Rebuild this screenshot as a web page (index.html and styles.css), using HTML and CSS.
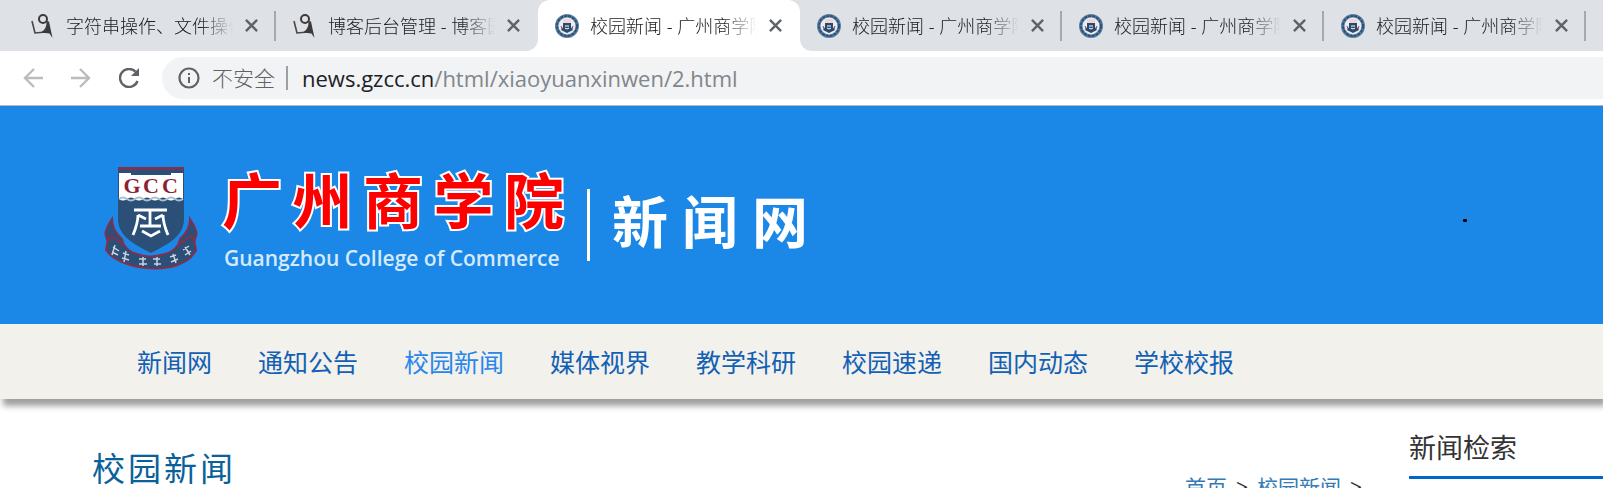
FILE: index.html
```html
<!DOCTYPE html>
<html lang="zh-CN">
<head>
<meta charset="utf-8">
<title>校园新闻 - 广州商学院</title>
<link rel="stylesheet" href="styles.css">
</head>
<body>
<svg class="sprite" aria-hidden="true">
<symbol id="icon-blog" viewBox="0 0 24 24">
<circle cx="12" cy="5" r="4" fill="none" stroke="#3c3a3a" stroke-width="2"/>
<path d="M1 7l3 12 11-1" fill="none" stroke="#4a4644" stroke-width="1.6"/>
<path d="M15.500 7L18 7.500 21.500 24 18.500 19.500 10 18.500Q16 15 15.500 7z" fill="#3c3a3a"/>
</symbol>
<symbol id="icon-school" viewBox="0 0 24 24">
<circle cx="12" cy="12" r="12" fill="#5c7fa3"/>
<circle cx="12" cy="12" r="10" fill="none" stroke="#2d5176" stroke-width="2" stroke-dasharray="3 1"/>
<circle cx="12" cy="12" r="8.500" fill="#e9edf2"/>
<path d="M8 9h8v4l2 3-6 3-6-3 2-3z" fill="#2c4a6c"/>
<path d="M8 5h8v4H8z" fill="#ecd6da"/>
<path d="M10 12h4M10 14l2 1 2-1" fill="none" stroke="#fff"/>
<path d="M6 12l1 3M18 12l-1 3" fill="none" stroke="#8a4a5c"/>
</symbol>
<symbol id="icon-close" viewBox="0 0 14 14">
<path d="M1 1l12 12M13 1L1 13" fill="none" stroke="#5f6368" stroke-width="2.6"/>
</symbol>
</svg>

<div class="tabs">
<div class="tab">
<svg class="tab-icon"><use href="#icon-blog"/></svg>
<span class="tab-title">字符串操作、文件操作</span>
<button class="tab-close" type="button" aria-label="关闭"><svg class="close-icon"><use href="#icon-close"/></svg></button>
</div>
<div class="tab no-line">
<svg class="tab-icon"><use href="#icon-blog"/></svg>
<span class="tab-title">博客后台管理 - 博客园</span>
<button class="tab-close" type="button" aria-label="关闭"><svg class="close-icon"><use href="#icon-close"/></svg></button>
</div>
<div class="tab active">
<svg class="tab-icon"><use href="#icon-school"/></svg>
<span class="tab-title">校园新闻 - 广州商学院</span>
<button class="tab-close" type="button" aria-label="关闭"><svg class="close-icon"><use href="#icon-close"/></svg></button>
</div>
<div class="tab">
<svg class="tab-icon"><use href="#icon-school"/></svg>
<span class="tab-title">校园新闻 - 广州商学院</span>
<button class="tab-close" type="button" aria-label="关闭"><svg class="close-icon"><use href="#icon-close"/></svg></button>
</div>
<div class="tab">
<svg class="tab-icon"><use href="#icon-school"/></svg>
<span class="tab-title">校园新闻 - 广州商学院</span>
<button class="tab-close" type="button" aria-label="关闭"><svg class="close-icon"><use href="#icon-close"/></svg></button>
</div>
<div class="tab">
<svg class="tab-icon"><use href="#icon-school"/></svg>
<span class="tab-title">校园新闻 - 广州商学院</span>
<button class="tab-close" type="button" aria-label="关闭"><svg class="close-icon"><use href="#icon-close"/></svg></button>
</div>
</div>

<div class="toolbar">
<button class="tool" type="button" aria-label="后退">
<svg width="20" height="20" viewBox="0 0 20 20" fill="none" stroke="#babcbe" stroke-width="2.4"><path d="M20 10H2M11 1l-9 9 9 9"/></svg>
</button>
<button class="tool" type="button" aria-label="前进">
<svg width="20" height="20" viewBox="0 0 20 20" fill="none" stroke="#babcbe" stroke-width="2.4"><path d="M0 10h18M9 1l9 9-9 9"/></svg>
</button>
<button class="tool" type="button" aria-label="重新加载">
<svg width="20" height="20" viewBox="0 0 20 20"><path d="M18.500 13A9 9 0 1 1 16.500 3.700" fill="none" stroke="#5f6368" stroke-width="2.4"/><path d="M20 0v8h-8z" fill="#5f6368"/></svg>
</button>
<div class="address">
<svg width="22" height="22" viewBox="0 0 22 22"><circle cx="11" cy="11" r="9.5" fill="none" stroke="#5f6368" stroke-width="2.2"/><path d="M10 10h2v6h-2zM10 6h2v2h-2z" fill="#5f6368"/></svg>
<span class="warning">不安全</span>
<span class="url"><span class="host">news.gzcc.cn</span>/html/xiaoyuanxinwen/2.html</span>
</div>
</div>

<header class="banner">
<svg class="shield" width="94" height="106" viewBox="0 0 94 106">
<path d="M14 1h66v52c0 18-18 26-33 34C32 79 14 71 14 53z" fill="#2b4f76"/>
<path d="M14 1h66v3H14z" fill="#7a3452"/>
<path d="M15 7h12v2h40V7h12v26q-4-3-8 0t-8 0-8 0-8 0-8 0-8 0-8 0-8 0z" fill="#fff"/>
<path d="M15 33q4-3 8 0t8 0 8 0 8 0 8 0 8 0 8 0 8 0" fill="none" stroke="#a9c0d4" stroke-width="2"/>
<text x="28 47 66" y="27" class="shield-text">GCC</text>
<path d="M30 44h33M46 44v16M34 49l8 4M59 49l-8 4M34 49q0 8-5 20M59 49q0 8 5 20M36 60h21M38 65l9 5 9-5" fill="none" stroke="#fff" stroke-width="2.8"/>
<path d="M8 53C4 59 0 66 2 70l4 14 16 2-4-13C10 66 8 60 8 53zM86 53c4 6 8 13 6 17l-4 14-16 2 4-13c8-7 10-13 10-20z" fill="#2b4f76" stroke="#81304d" stroke-width="2"/>
<path d="M7 70c-2 2-4 6-5 14 14 21 76 28 90 0-1-8-3-12-5-14l-14 10q-4 6-12 8-16 5-28 0-8-2-12-8z" fill="#2b4f76" stroke="#81304d" stroke-width="2"/>
<path d="M9 81l6 4M8 86l6 3M11 79l-3 10M19 87l6 2M18 92l7 2M22 85l-2 11M35 93h7M35 98h8M39 91v9M49 93h7M50 98h7M53 91v9M66 91l6-2M67 96l7-3M69 88l3 9M79 84l6-4M81 89l6-4M81 81l5 8" stroke="#c8d3df" stroke-width="1.5" fill="none"/>
</svg>
<div class="school">
<h1 class="school-name"><span>广</span><span>州</span><span>商</span><span>学</span><span>院</span></h1>
<p class="school-en">Guangzhou College of Commerce</p>
</div>
<div class="site-name"><span>新</span><span>闻</span><span>网</span></div>
<i class="dot"></i>
</header>

<nav class="nav">
<a href="#">新闻网</a>
<a href="#">通知公告</a>
<a href="#" class="current">校园新闻</a>
<a href="#">媒体视界</a>
<a href="#">教学科研</a>
<a href="#">校园速递</a>
<a href="#">国内动态</a>
<a href="#">学校校报</a>
</nav>

<main class="content">
<div class="list-head">
<h2 class="list-title">校园新闻</h2>
<div class="crumbs"><a href="#">首页</a><span>&gt;</span><a href="#">校园新闻</a><span>&gt;</span></div>
</div>
<aside class="side">
<h3 class="side-title">新闻检索</h3>
</aside>
</main>
</body>
</html>
```

FILE: styles.css
```css
* {
  box-sizing: border-box;
}

body {
  margin: 0;
  overflow: hidden;
  background: #fff;
  font-family: "Noto Sans", "Noto Sans CJK SC", sans-serif;
  color: #333;
}

a {
  text-decoration: none;
}

h1, h2, h3, p {
  margin: 0;
  font-weight: normal;
}

button {
  padding: 0;
  border: none;
  background: none;
}

svg {
  display: block;
  flex: none;
}

.sprite {
  position: absolute;
  width: 0;
  height: 0;
}

/* browser tabs */
.tabs {
  display: flex;
  height: 51px;
  padding-left: 14px;
  background: #dee1e6;
}

.tab {
  display: flex;
  flex: 0 1 262px;
  align-items: center;
  min-width: 0;
  padding: 0 18px 0 17px;
  background: linear-gradient(#a5a8ad, #a5a8ad) right center / 2px 30px no-repeat;
}

.tab.active {
  background: #fff;
  border-radius: 12px 12px 0 0;
  box-shadow: -12px 12px 0 #fff, 12px 12px 0 #fff;
}

.tab.no-line {
  position: relative;
  background: #dee1e6;
  border-radius: 0 0 12px 0;
}

.tab.active + .tab {
  position: relative;
  background-color: #dee1e6;
  border-radius: 0 0 0 12px;
}

.tab-icon {
  width: 24px;
  height: 24px;
}

.tab-title {
  flex: 1;
  margin-left: 11px;
  overflow: hidden;
  font-size: 18px;
  font-weight: 300;
  line-height: 28px;
  white-space: nowrap;
  color: #202124;
  -webkit-mask-image: linear-gradient(to right, #000 80%, transparent);
  mask-image: linear-gradient(to right, #000 80%, transparent);
}

.tab-close {
  margin-left: 12px;
}

.close-icon {
  width: 13px;
  height: 13px;
}

/* address bar */
.toolbar {
  display: flex;
  align-items: center;
  gap: 28px;
  height: 55px;
  padding-left: 23px;
  border-bottom: 1px solid #b4b7ba;
}

.tool {
  width: 20px;
}

.address {
  display: flex;
  flex: 1;
  align-items: center;
  height: 42px;
  margin-left: -5px;
  padding-left: 16px;
  background: #f1f3f4;
  border-radius: 21px 0 0 21px;
}

.warning {
  margin-left: 12px;
  padding-right: 11px;
  border-right: 2px solid #9aa0a6;
  font-size: 21px;
  font-weight: 300;
  line-height: 24px;
  color: #5f6368;
}

.url {
  margin-left: 14px;
  font-family: "Open Sans", sans-serif;
  font-size: 22px;
  line-height: 28px;
  color: #80868b;
}

.host {
  color: #202124;
}

/* school banner */
.banner {
  position: relative;
  display: flex;
  height: 218px;
  padding: 60px 0 0 104px;
  background: #1b87e6;
}

.shield-text {
  font-family: "Liberation Serif", serif;
  font-size: 22px;
  font-weight: bold;
  text-anchor: middle;
  fill: #8e1f36;
}

.school {
  width: 342px;
  margin-left: 24px;
}

.school-name {
  display: flex;
  justify-content: space-between;
  font-family: "Noto Sans CJK SC", sans-serif;
  font-size: 60px;
  font-weight: bold;
  line-height: 64px;
  color: #f00;
  -webkit-text-stroke: 4px #fff;
  paint-order: stroke fill;
}

.school-en {
  margin-top: 14px;
  padding-left: 2px;
  font-family: "Open Sans", sans-serif;
  font-size: 21px;
  font-weight: 600;
  line-height: 28px;
  color: #d5eaff;
  white-space: nowrap;
}

.site-name {
  display: flex;
  gap: 14px;
  align-self: flex-start;
  margin: 23px 0 0 23px;
  padding: 0 0 12px 22px;
  border-left: 3px solid #fff;
  font-family: "Noto Sans CJK SC", sans-serif;
  font-size: 56px;
  font-weight: bold;
  line-height: 60px;
  color: #fff;
}

.dot {
  position: absolute;
  top: 113px;
  right: 136px;
  width: 4px;
  height: 3px;
  border-radius: 1px;
  background: #000;
}

/* menu */
.nav {
  position: relative;
  display: flex;
  gap: 46px;
  padding: 20px 0 19px 137px;
  background: #f2f1ec;
  box-shadow: 3px 7px 6px #a0a0a0;
  font-size: 25px;
  line-height: 36px;
}

.nav a {
  color: #1260b4;
}

.nav .current {
  color: #2a86ea;
}

/* page content */
.content {
  display: flex;
  padding-left: 92px;
}

.list-head {
  display: flex;
  flex: 1;
  align-items: flex-start;
  justify-content: space-between;
  margin-right: 47px;
}

.list-title {
  padding-top: 46px;
  font-size: 33px;
  line-height: 48px;
  letter-spacing: 3px;
  color: #0a6199;
}

.crumbs {
  display: flex;
  gap: 9px;
  padding-top: 72px;
  font-size: 21px;
  line-height: 32px;
}

.crumbs a {
  color: #337ab7;
}

.side {
  width: 194px;
}

.side-title {
  padding: 29px 0 8px;
  border-bottom: 3px solid #0066cc;
  font-size: 27px;
  line-height: 40px;
}
```
